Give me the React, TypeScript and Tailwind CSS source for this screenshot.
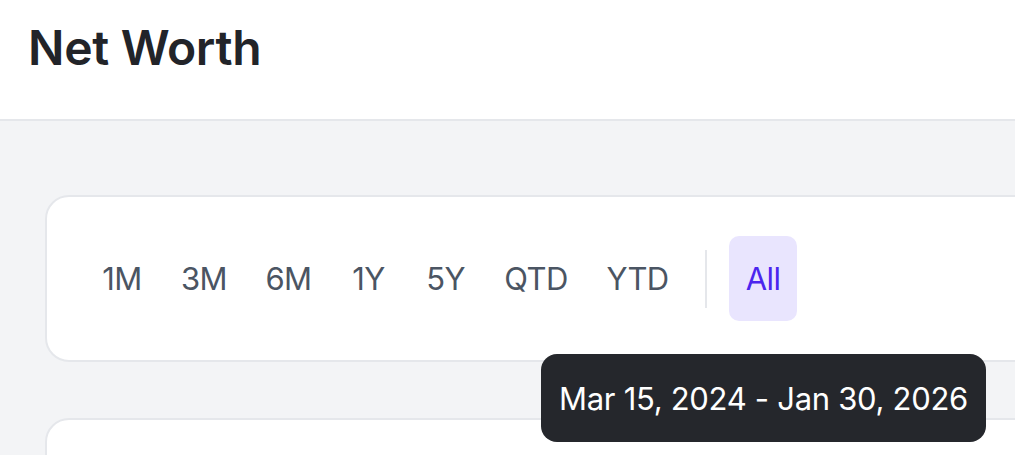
import React from "react";

// widths of each range pill, taken from the design
const ranges = [
    { label: "1M", w: "w-[70px]" },
    { label: "3M", w: "w-[74px]" },
    { label: "6M", w: "w-[75px]" },
    { label: "1Y", w: "w-[65px]" },
    { label: "5Y", w: "w-[69px]" },
    { label: "QTD", w: "w-[92px]" },
    { label: "YTD", w: "w-[91px]" },
];

export default function App() {
    return (
        <div className="relative h-[455px] w-[1015px] overflow-hidden bg-[#f3f4f6] font-['Inter',sans-serif]">
            <header className="h-[121px] bg-white border-b-2 border-[#e5e7eb] pl-[28px] pt-[24px]">
                <h1 className="text-[48px] leading-none font-semibold text-[#222429] tracking-[-0.3px]">Net Worth</h1>
            </header>

            <main className="pl-[45px] pt-[74px]">
                <div className="w-[1010px] bg-white border-2 border-[#e5e7eb] rounded-[24px] pl-[40px] py-[39px]">
                    <div className="flex items-center gap-[10px]">
                        {ranges.map((r) => (
                            <button
                                key={r.label}
                                className={`${r.w} h-[85px] flex items-center justify-center rounded-[10px] text-[31px] tracking-[-0.6px] text-[#4b5563] leading-none`}
                            >
                                {r.label}
                            </button>
                        ))}
                        <div className="w-[2px] h-[58px] bg-[#e5e7eb] ml-[12px] mr-[12px]" />
                        <button className="w-[68px] h-[85px] flex items-center justify-center rounded-[10px] bg-[#e9e5fe] text-[31px] tracking-[-0.6px] text-[#4b25ee] leading-none">
                            All
                        </button>
                    </div>
                </div>

                <div className="mt-[56px] w-[1010px] h-[200px] bg-white border-2 border-[#e5e7eb] rounded-[24px]" />
            </main>

            <div className="absolute left-[541px] top-[354px] w-[445px] h-[88px] rounded-[16px] bg-[#25272c] flex items-center justify-center">
                <span className="text-[31px] text-white leading-none tracking-[-0.3px]">Mar 15, 2024 - Jan 30, 2026</span>
            </div>
        </div>
    );
}
